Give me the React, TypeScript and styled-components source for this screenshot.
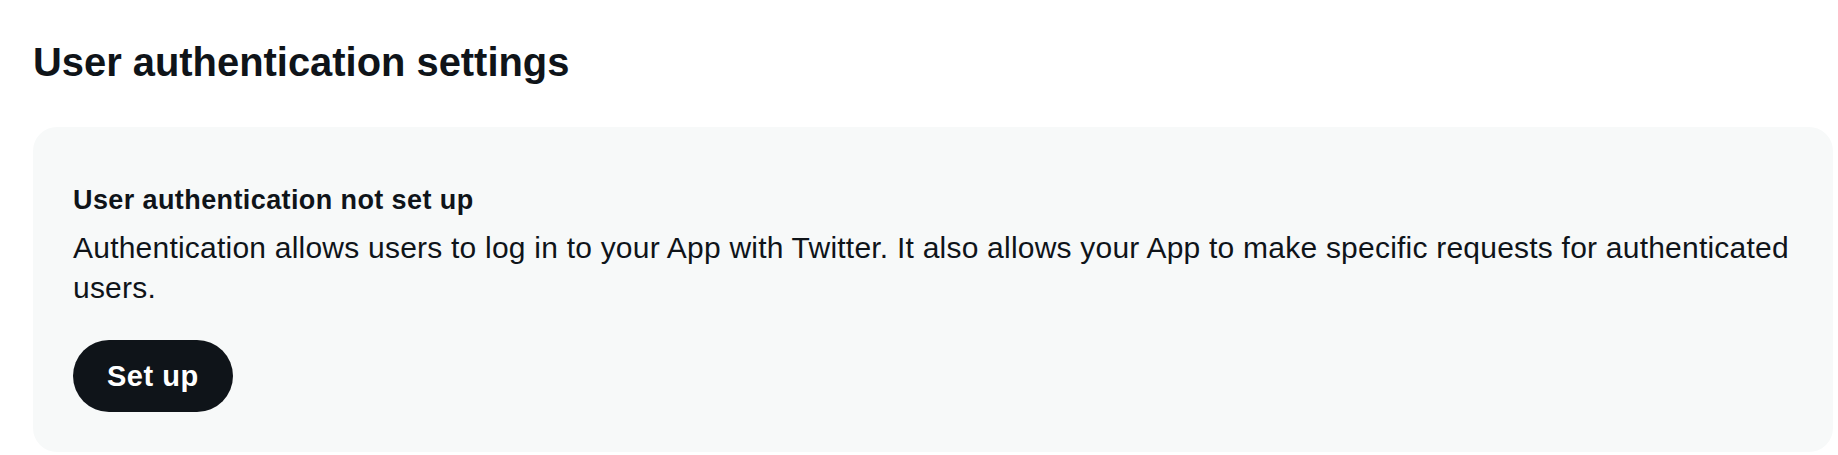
import React from 'react';
import styled, { createGlobalStyle } from 'styled-components';

const GlobalStyle = createGlobalStyle`
  html, body {
    margin: 0;
    padding: 0;
    background: #ffffff;
  }
  body {
    font-family: 'Liberation Sans', Arial, sans-serif;
    color: #0f1419;
  }
`;

const Page = styled.main`
  padding: 38px 5px 0 33px;
`;

const Title = styled.h1`
  margin: 0 0 41px;
  font-size: 39.9px;
  line-height: 48px;
  font-weight: 700;
  color: #0f1419;
`;

const Card = styled.section`
  background: #f7f9f9;
  border-radius: 24px;
  padding: 55px 40px 40px;
  display: flex;
  flex-direction: column;
  align-items: flex-start;
`;

const CardTitle = styled.h2`
  margin: 0 0 10px;
  font-size: 27px;
  line-height: 36px;
  font-weight: 700;
  letter-spacing: 0.4px;
`;

const Description = styled.p`
  margin: 0 0 32px;
  font-size: 30px;
  line-height: 40px;
  font-weight: 400;
  letter-spacing: 0.22px;
`;

const Button = styled.button`
  display: inline-flex;
  align-items: center;
  justify-content: center;
  height: 72px;
  padding: 0 34px;
  border: none;
  border-radius: 9999px;
  background: #0f1419;
  color: #ffffff;
  font-family: 'Liberation Sans', Arial, sans-serif;
  font-size: 29px;
  font-weight: 700;
  letter-spacing: 0.5px;
  cursor: pointer;
`;

export default function App() {
  return (
    <>
      <GlobalStyle />
      <Page>
        <Title>User authentication settings</Title>
        <Card>
          <CardTitle>User authentication not set up</CardTitle>
          <Description>
            Authentication allows users to log in to your App with Twitter. It also allows your
            App to make specific requests for authenticated users.
          </Description>
          <Button>Set up</Button>
        </Card>
      </Page>
    </>
  );
}
